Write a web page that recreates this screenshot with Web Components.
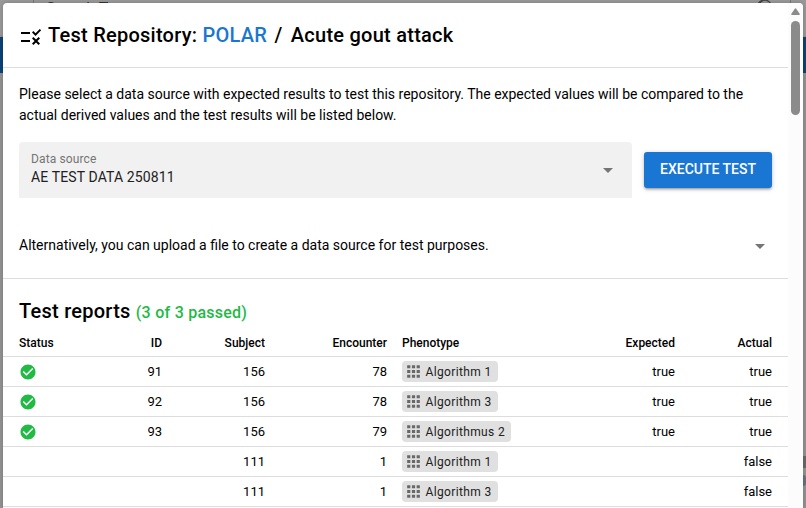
<!DOCTYPE html>
<html lang="en"><head><meta charset="utf-8"><title>Test Repository</title>
<style>html,body{margin:0;height:508px;overflow:hidden}body{font:14px/21px Roboto,"Liberation Sans",sans-serif;color:#000}</style></head>
<body><test-page></test-page>
<script>
const define=(name,html)=>customElements.define(name,class extends HTMLElement{
  constructor(){super();const t=document.createElement('template');t.innerHTML=html;this.attachShadow({mode:'open'}).append(t.content.cloneNode(true));}
});
const paths={
 rule:'M16.54 11L13 7.46l1.41-1.41 2.12 2.12 4.24-4.24 1.41 1.41L16.54 11zM11 7H2v2h9V7zm10 6.41L19.59 12 17 14.59 14.41 12 13 13.41 15.59 16 13 18.59 14.41 20 17 17.41 19.59 20 21 18.59 18.41 16 21 13.41zM11 15H2v2h9v-2z',
 check:'M12 2C6.48 2 2 6.48 2 12s4.48 10 10 10 10-4.48 10-10S17.52 2 12 2zm-2 15l-5-5 1.41-1.41L10 14.17l7.59-7.59L19 8l-9 9z',
 apps:'M4 8h4V4H4v4zm6 12h4v-4h-4v4zm-6 0h4v-4H4v4zm0-6h4v-4H4v4zm6 0h4v-4h-4v4zm6-10v4h4V4h-4zm-6 4h4V4h-4v4zm6 6h4v-4h-4v4zm0 6h4v-4h-4v4z',
 down:'M7 10l5 5 5-5z',
 search:'M15.5 14h-.79l-.28-.27A6.5 6.5 0 1 0 13 15.3l.27.28v.79l5 4.99L19.76 20l-4.26-4zM9.5 14a4.5 4.5 0 1 1 0-9 4.5 4.5 0 0 1 0 9z'
};
customElements.define('ui-icon',class extends HTMLElement{
  constructor(){super();this.attachShadow({mode:'open'});}
  connectedCallback(){this.shadowRoot.innerHTML=`<style>:host{display:block;flex:none;width:24px;height:24px}svg{display:block;width:100%;height:100%;fill:currentColor}</style><svg viewBox="0 0 24 24"><path d="${paths[this.getAttribute('name')]}"/></svg>`;}
});
define('app-backdrop',`<style>:host{display:block;width:806px;height:508px;background:#999}
.top{height:37px;display:flex;box-sizing:border-box;padding:0 15px 0 33px;overflow:hidden}
.field{flex:1;display:flex;justify-content:space-between;border:solid #777;border-width:0 1px;padding:0 8px 0 12px;font:16px/21px Roboto,sans-serif;color:#333;height:6px}
.field span{margin-top:-2px}.field ui-icon{margin-top:-5px;width:28px;height:28px;color:#444}
.bar{height:36px;background:#0c4277;box-shadow:0 1px 3px #0006}.rest{height:435px;background:#929292;display:flex;flex-direction:column;align-items:flex-end;box-sizing:border-box;padding-top:383px;gap:7px}
.a{width:4px;height:12px;background:#696969}.b{width:3px;height:11px;border-radius:0 5px 5px 0;background:#66727e}</style>
<div class="top"><div class="field"><span>Search Text</span><ui-icon name="search"></ui-icon></div></div><div class="bar"></div><div class="rest"><div class="a"></div><div class="b"></div></div>`);
define('scroll-bar',`<style>:host{display:flex;flex-direction:column;align-items:center;flex:none;width:15px;height:505px;background:#fcfcfc;border-top-right-radius:4px}
svg{display:block;margin-top:5px;width:9px;height:7px;fill:#8b8b8b}.thumb{margin-top:6px;width:9px;height:94px;border-radius:5px;background:#8b8b8b}</style>
<svg viewBox="0 0 9 7"><path d="M4 .4Q4.5 0 5 .4L8.8 6Q9 7 8 7H1Q0 7 .2 6z"/></svg><div class="thumb"></div>`);
define('dialog-title',`<style>:host{display:flex;align-items:center;height:64px;border-bottom:1px solid #ddd;padding:0 16px;font-size:20px;line-height:32px;font-weight:500;letter-spacing:.25px;box-sizing:content-box}
ui-icon{margin:3px 5px 0 0}div{white-space:pre}::slotted(b){font-weight:500;color:#1976d2}</style><ui-icon name="rule"></ui-icon><div><slot></slot></div>`);
define('select-field',`<style>:host{display:flex;align-items:center;box-sizing:border-box;width:613px;height:56px;background:#f1f1f1;border-radius:4px 4px 0 0;padding:0 12px;color:#757575}
.t{flex:1}.l{font-size:12px;line-height:16px;letter-spacing:.13px;margin-top:-2px}.v{font-size:14px;line-height:20px;color:#212121;letter-spacing:.13px}</style>
<div class="t"><div class="l"><slot name="label"></slot></div><div class="v"><slot></slot></div></div><ui-icon name="down"></ui-icon>`);
define('action-button',`<style>:host{display:flex;align-items:center;justify-content:center;width:128px;height:36px;background:#1976d2;color:#fff;border-radius:3px;font-size:14px;font-weight:500;line-height:24px;box-shadow:0 1px 5px #0003,0 2px 2px #00000024,0 3px 1px -2px #0000001f;white-space:nowrap}span{margin-top:-2px}</style><span><slot></slot></span>`);
define('algo-chip',`<style>:host{display:inline-flex;align-items:center;box-sizing:border-box;height:21px;background:#e0e0e0;border-radius:4px;padding:0 6px 0 2px;color:#212121;letter-spacing:.36px;font-size:12px;line-height:21px}
ui-icon{width:19px;height:19px;margin-right:2.5px;color:#686868}span{padding-top:1px}</style><ui-icon name="apps"></ui-icon><span><slot></slot></span>`);
define('report-row',`<style>:host{display:grid;grid-template-columns:64px 79px 103px 122px 211px 77px 97px;box-sizing:border-box;height:30px;padding:0 16px;align-items:center;border-bottom:1px solid #ddd;font-size:13px;line-height:20px;text-align:right}
:host([head]){font-weight:500;font-size:12px;height:28px}div{display:block;white-space:nowrap}.s,.p{text-align:left}.p{padding-left:15px;display:flex;align-items:center}</style>
<div class="s"><slot name="status"></slot></div><div><slot name="id"></slot></div><div><slot name="subject"></slot></div><div><slot name="encounter"></slot></div><div class="p"><slot name="phenotype"></slot></div><div><slot name="expected"></slot></div><div><slot name="actual"></slot></div>`);
const row=(id,sub,enc,algo,exp,act)=>`<report-row>${id?`<ui-icon class="ok" slot="status" name="check"></ui-icon><span slot="id">${id}</span>`:''}<span slot="subject">${sub}</span><span slot="encounter">${enc}</span><algo-chip slot="phenotype">${algo}</algo-chip>${exp?`<span slot="expected">${exp}</span>`:''}<span slot="actual">${act}</span></report-row>`;
define('test-page',`<style>:host{display:block;position:relative;width:806px;height:508px;overflow:hidden}
.dialog{position:absolute;left:3px;top:3px;width:800px;height:505px;display:flex;background:#fff;border-radius:4px 4px 0 0;box-shadow:0 0 4px #0003;overflow:hidden}
main{flex:1;min-width:0}.intro{padding:16px 16px 0;letter-spacing:0;white-space:nowrap}
.pick{display:flex;align-items:center;gap:12px;padding:16px 16px 0}
.upload{display:flex;align-items:center;justify-content:space-between;height:48px;padding:23px 16px 9px;border-bottom:1px solid #ddd}
.upload ui-icon{color:#757575;margin-top:2px}
h2{margin:0;padding:16px 16px 0;font-size:20px;line-height:32px;font-weight:500;letter-spacing:.25px}h2 small{font-size:16px;letter-spacing:.25px;color:#21ba45}
.slash{margin:0 3px 0 -3px}.ok{width:18px;height:18px;color:#21ba45}</style>
<app-backdrop></app-backdrop><div class="dialog"><main>
<dialog-title>Test Repository: <b>POLAR</b> <span class="slash"> / </span>Acute gout attack</dialog-title>
<div class="intro">Please select a data source with expected results to test this repository. The expected values will be compared to the<br>actual derived values and the test results will be listed below.</div>
<div class="pick"><select-field><span slot="label">Data source</span>AE TEST DATA 250811</select-field><action-button>EXECUTE TEST</action-button></div>
<div class="upload"><span>Alternatively, you can upload a file to create a data source for test purposes.</span><ui-icon name="down"></ui-icon></div>
<h2>Test reports <small>(3 of 3 passed)</small></h2>
<report-row head><span slot="status">Status</span><span slot="id">ID</span><span slot="subject">Subject</span><span slot="encounter">Encounter</span><span slot="phenotype">Phenotype</span><span slot="expected">Expected</span><span slot="actual">Actual</span></report-row>
${row(91,156,78,'Algorithm 1','true','true')}${row(92,156,78,'Algorithm 3','true','true')}${row(93,156,79,'Algorithmus 2','true','true')}${row('',111,1,'Algorithm 1','','false')}${row('',111,1,'Algorithm 3','','false')}
</main><scroll-bar></scroll-bar></div>`);
</script></body></html>
